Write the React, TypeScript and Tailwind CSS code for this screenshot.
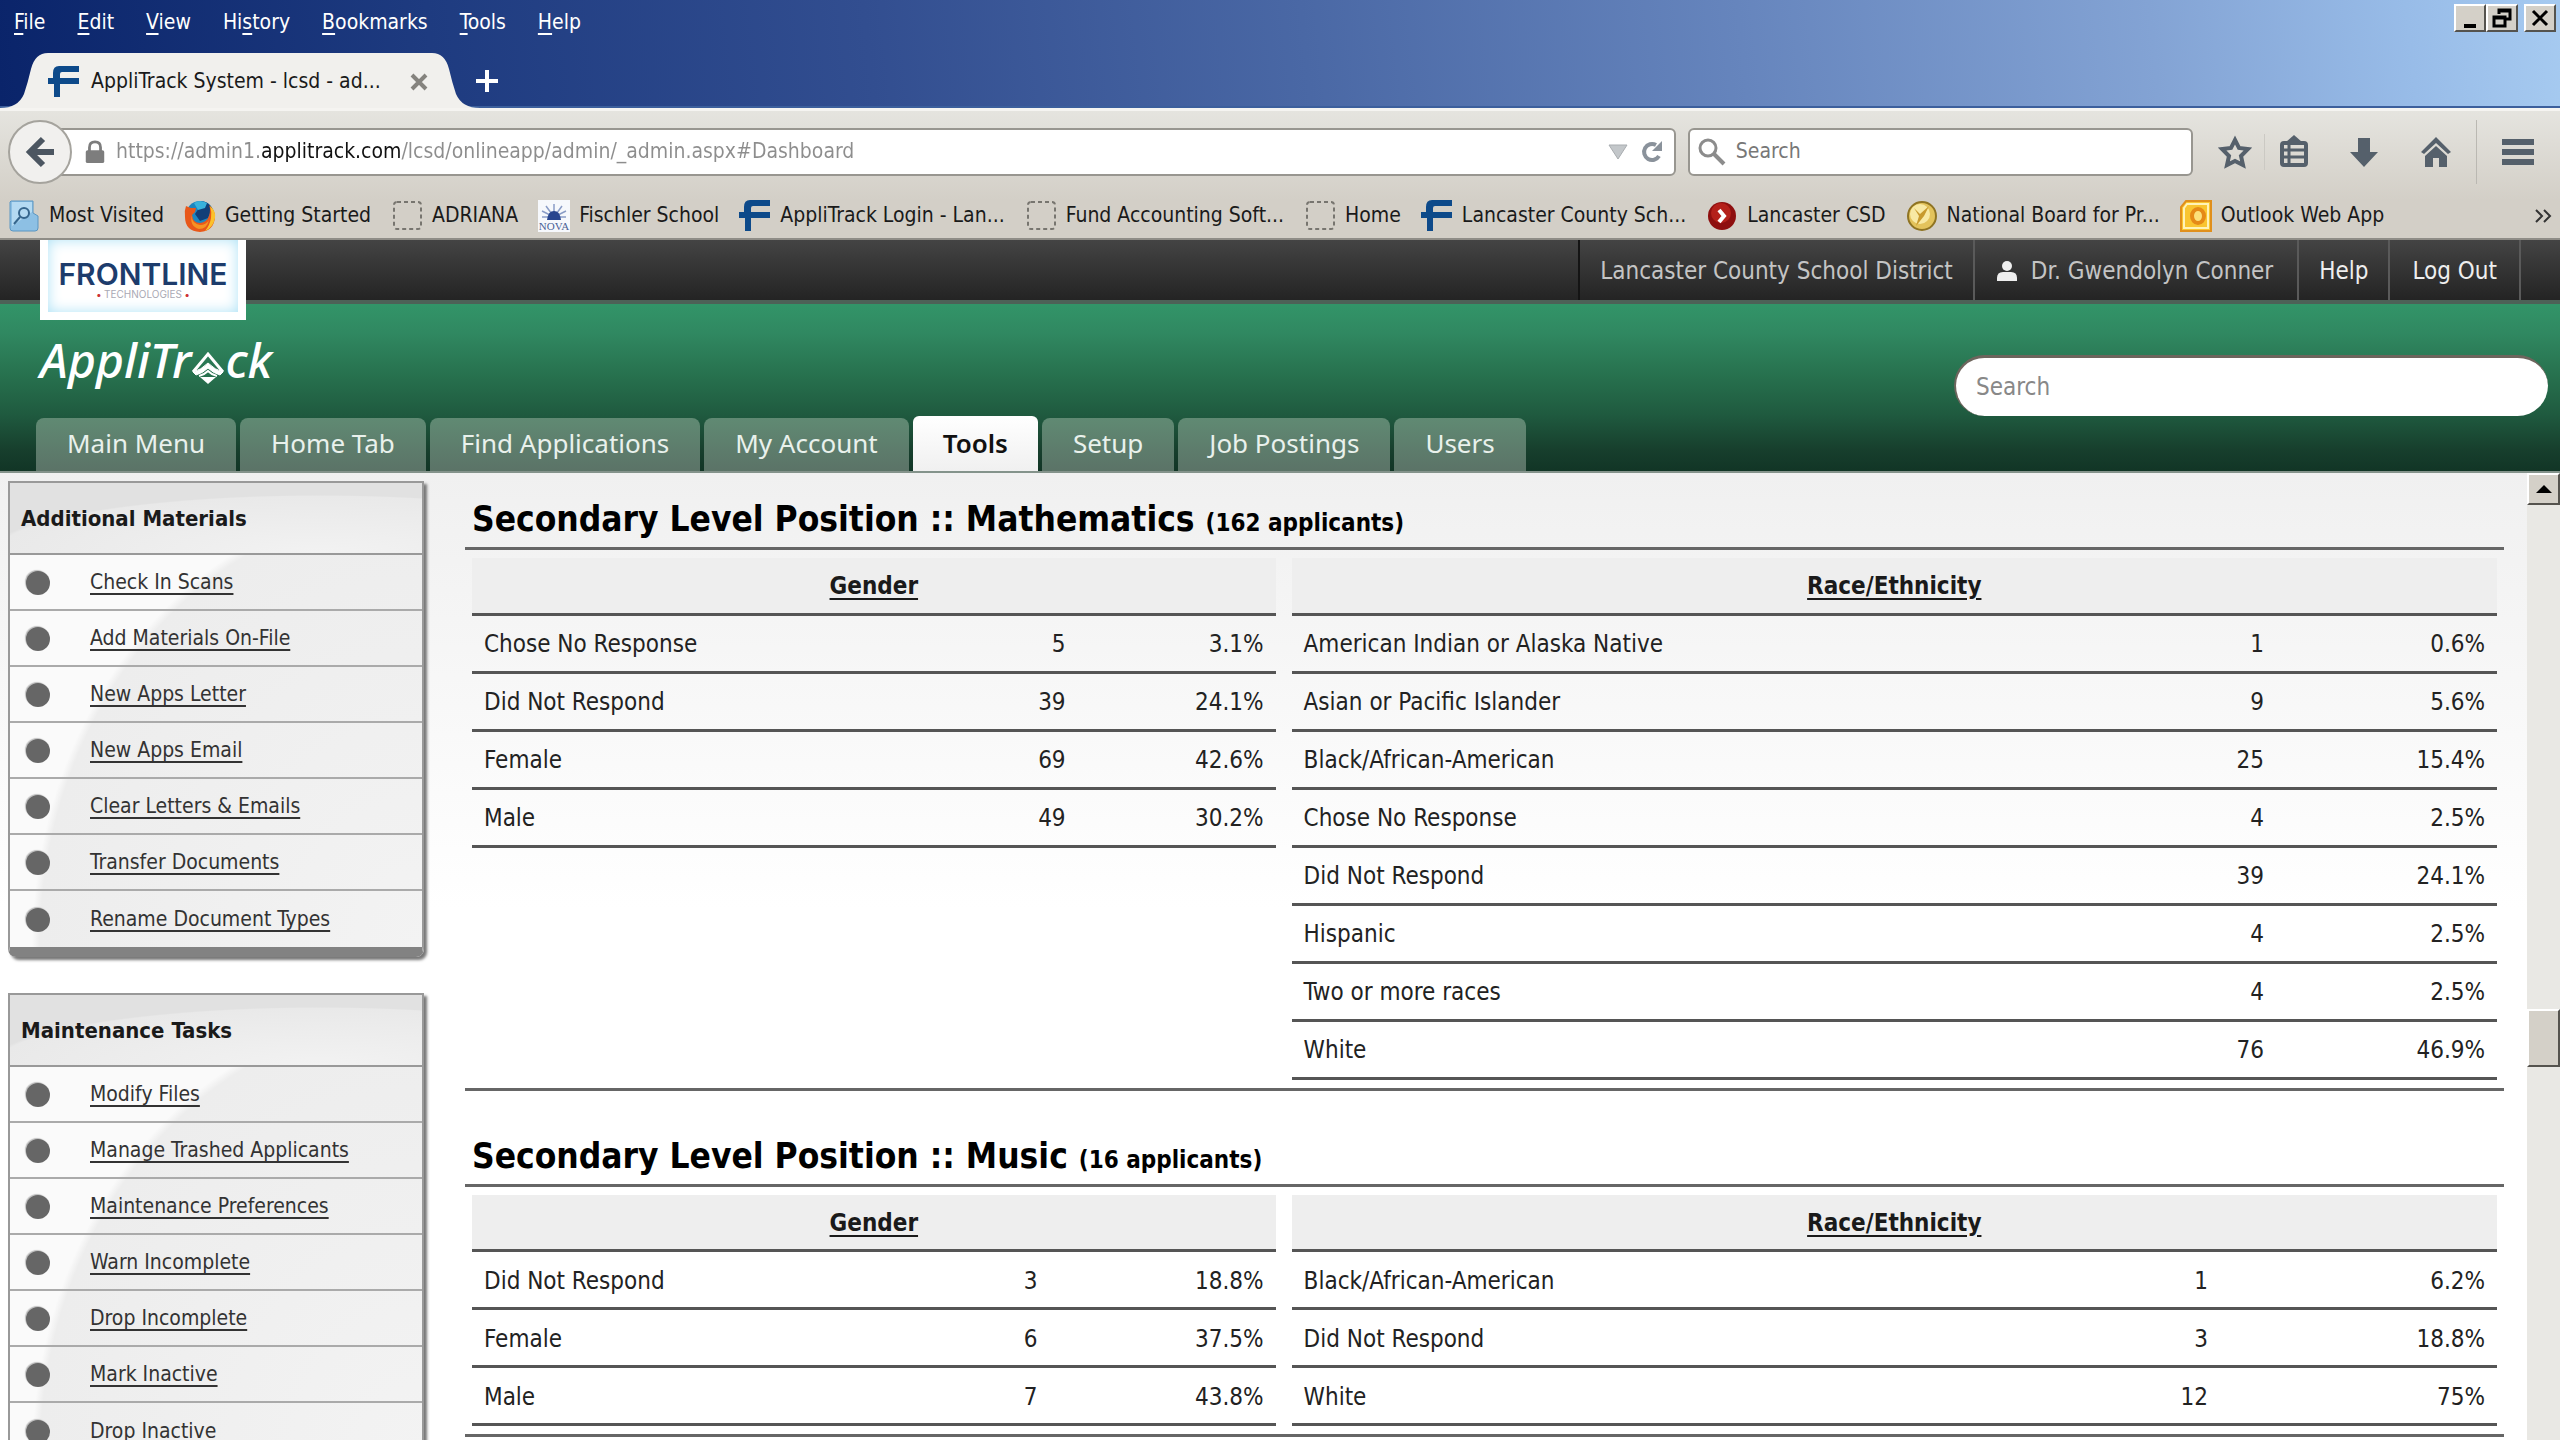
import React from "react";

const menus = [
    ["", "F", "ile"],
    ["", "E", "dit"],
    ["", "V", "iew"],
    ["Hi", "s", "tory"],
    ["", "B", "ookmarks"],
    ["", "T", "ools"],
    ["", "H", "elp"],
];

const tabs = ["Main Menu", "Home Tab", "Find Applications", "My Account", "Tools", "Setup", "Job Postings", "Users"];

const materials = [
    "Check In Scans",
    "Add Materials On-File",
    "New Apps Letter",
    "New Apps Email",
    "Clear Letters & Emails",
    "Transfer Documents",
    "Rename Document Types",
];

const maintenance = [
    "Modify Files",
    "Manage Trashed Applicants",
    "Maintenance Preferences",
    "Warn Incomplete",
    "Drop Incomplete",
    "Mark Inactive",
    "Drop Inactive",
];

type Row = [string, string, string];

const mathGender: Row[] = [
    ["Chose No Response", "5", "3.1%"],
    ["Did Not Respond", "39", "24.1%"],
    ["Female", "69", "42.6%"],
    ["Male", "49", "30.2%"],
];

const mathRace: Row[] = [
    ["American Indian or Alaska Native", "1", "0.6%"],
    ["Asian or Pacific Islander", "9", "5.6%"],
    ["Black/African-American", "25", "15.4%"],
    ["Chose No Response", "4", "2.5%"],
    ["Did Not Respond", "39", "24.1%"],
    ["Hispanic", "4", "2.5%"],
    ["Two or more races", "4", "2.5%"],
    ["White", "76", "46.9%"],
];

const musicGender: Row[] = [
    ["Did Not Respond", "3", "18.8%"],
    ["Female", "6", "37.5%"],
    ["Male", "7", "43.8%"],
];

const musicRace: Row[] = [
    ["Black/African-American", "1", "6.2%"],
    ["Did Not Respond", "3", "18.8%"],
    ["White", "12", "75%"],
];

function FrontlineIcon() {
    return (
        <svg viewBox="0 0 32 32" className="size-8 shrink-0" fill="#0d4a8a">
            <path d="M11 0h20v6H14q-2 0-2 2v4h19v6H12v13H6V18H0v-6h5V7q0-7 6-7z" />
        </svg>
    );
}

function BlankIcon() {
    return (
        <svg viewBox="0 0 32 32" className="size-8 shrink-0" fill="none" stroke="#77756f" strokeWidth="2">
            <rect x="3" y="2" width="27" height="27" rx="3" strokeDasharray="4 3" />
        </svg>
    );
}

function MostVisitedIcon() {
    return (
        <svg viewBox="0 0 32 32" className="size-8 shrink-0">
            <path d="M3 1h22v12l5 3v12q0 3-3 3H5q-3 0-3-3V2z" fill="#8dc0e4" stroke="#5a96c2" />
            <path d="M4 2h20v10l-20 14z" fill="#b4daf2" />
            <circle cx="16" cy="13" r="5" fill="none" stroke="#35658c" strokeWidth="2" />
            <path d="M12 17l-6 7" stroke="#35658c" strokeWidth="2" />
        </svg>
    );
}

function FirefoxIcon() {
    return (
        <svg viewBox="0 0 32 32" className="size-8 shrink-0">
            <circle cx="16" cy="15" r="14" fill="#1c86c0" />
            <path d="M16 1q8 0 12 7l-4 10-8 3-5-7 4-6z" fill="#123f78" />
            <path d="M10 3q6-4 13 0l-2 5-7 2z" fill="#39b2dc" />
            <path d="M2 6q2 1 5 2l5 0-1 4-3 3q1 8 8 8 7-1 9-7 2-6 0-11 6 5 6 12-1 14-15 15Q1 31 1 17 0 11 2 6z" fill="#e8581a" />
            <path d="M26 6q6 5 5 12-2 10-10 13 5-6 6-13 1-6-1-12z" fill="#fbc12c" />
            <path d="M8 15q-1 8 8 10 6 0 9-5-2 9-10 9Q5 26 8 15z" fill="#f59324" />
        </svg>
    );
}

function NovaIcon() {
    return (
        <svg viewBox="0 0 32 32" className="size-8 shrink-0">
            <rect width="32" height="32" fill="#f6f8fc" />
            <g stroke="#8a9cc6" strokeWidth="1.5">
                <path d="M16 17V4M16 17L8 6M16 17l8-11M16 17L4 11M16 17l12-6M16 17H4M16 17h12" />
            </g>
            <path d="M9 20q1-9 7-9t7 9z" fill="#28458e" />
            <text x="16" y="30" textAnchor="middle" fontFamily="Liberation Serif" fontSize="11" fill="#4a5f95">NOVA</text>
        </svg>
    );
}

function RedArrowIcon() {
    return (
        <svg viewBox="0 0 32 32" className="size-8 shrink-0">
            <circle cx="16" cy="16" r="14" fill="#8e0f0f" />
            <circle cx="15" cy="13" r="10" fill="#b4201a" />
            <path d="M13 10l5 6-5 6" fill="none" stroke="#fff" strokeWidth="4" />
        </svg>
    );
}

function MedalIcon() {
    return (
        <svg viewBox="0 0 32 32" className="size-8 shrink-0">
            <circle cx="16" cy="16" r="14" fill="#e3c35c" stroke="#8f7423" strokeWidth="2" />
            <circle cx="14" cy="14" r="10" fill="#f8e9a4" />
            <path d="M8 8l6 6 9-8-5 10-8 10 3-10z" fill="#c89a2e" />
        </svg>
    );
}

function OutlookIcon() {
    return (
        <svg viewBox="0 0 32 32" className="size-8 shrink-0">
            <path d="M6 1h25v30H1V7z" fill="#f9c531" stroke="#e08f1c" strokeWidth="2" />
            <path d="M7 4h21v24H4V8z" fill="none" stroke="#fff3b8" strokeWidth="2" />
            <ellipse cx="18" cy="16" rx="6" ry="7" fill="#fce07a" stroke="#e58a17" strokeWidth="4" />
        </svg>
    );
}

const bookmarks: [React.ReactNode, string][] = [
    [<MostVisitedIcon />, "Most Visited"],
    [<FirefoxIcon />, "Getting Started"],
    [<BlankIcon />, "ADRIANA"],
    [<NovaIcon />, "Fischler School"],
    [<FrontlineIcon />, "AppliTrack Login - Lan..."],
    [<BlankIcon />, "Fund Accounting Soft..."],
    [<BlankIcon />, "Home"],
    [<FrontlineIcon />, "Lancaster County Sch..."],
    [<RedArrowIcon />, "Lancaster CSD"],
    [<MedalIcon />, "National Board for Pr..."],
    [<OutlookIcon />, "Outlook Web App"],
];

function WindowButton({ label, children }: { label: string; children: React.ReactNode }) {
    return (
        <button
            aria-label={label}
            className="flex h-7 w-8 items-center justify-center border-2 border-t-white border-r-[#55534e] border-b-[#55534e] border-l-white bg-[#d4d0c8]"
        >
            {children}
        </button>
    );
}

function TitleBar() {
    return (
        <header className="flex h-[108px] flex-col justify-between border-b-2 border-[#3c5f9c] bg-[linear-gradient(84deg,#0a246a_0%,#1e3b80_17%,#324e90_34%,#4a68a5_51%,#6685bd_68%,#83a3d4_84%,#98bce8_94%,#a6caf0_100%)]">
            <div className="flex items-start justify-between">
                <nav className="flex gap-8 px-3.5 pt-2 text-white">
                    {menus.map(([before, key, after]) => (
                        <button key={key + after} className="leading-7">
                            {before}
                            <span className="underline underline-offset-4">{key}</span>
                            {after}
                        </button>
                    ))}
                </nav>
                <div className="flex pt-1 pr-1">
                    <WindowButton label="Minimize">
                        <svg viewBox="0 0 24 24" className="size-6">
                            <path d="M6 18h12v4H6z" />
                        </svg>
                    </WindowButton>
                    <WindowButton label="Restore">
                        <svg viewBox="0 0 24 24" className="size-6" fill="none" stroke="#000" strokeWidth="2">
                            <path d="M9 8V4h11v9h-4M9 5h11M4 11h11v9H4zM4 12h11" strokeWidth="3" />
                        </svg>
                    </WindowButton>
                    <div className="w-1.5" />
                    <WindowButton label="Close">
                        <svg viewBox="0 0 24 24" className="size-6" stroke="#000" strokeWidth="3">
                            <path d="M5 5l14 14M19 5L5 19" />
                        </svg>
                    </WindowButton>
                </div>
            </div>
            <div className="-mb-0.5 flex h-[55px] items-center">
                <svg viewBox="0 0 48 55" className="h-full w-12 shrink-0">
                    <path d="M0 55q18 0 24-14 4-12 7-25Q35 0 48 0v55z" fill="#f1f0ed" />
                </svg>
                <div className="flex h-full w-96 items-center bg-[#f1f0ed] pt-0.5">
                    <FrontlineIcon />
                    <span className="ml-[11px] flex-1">AppliTrack System - lcsd - ad...</span>
                    <button aria-label="Close tab" className="mr-1">
                        <svg viewBox="0 0 18 18" className="size-[18px]" stroke="#85837e" strokeWidth="4">
                            <path d="M2 2l14 14M16 2L2 16" />
                        </svg>
                    </button>
                </div>
                <svg viewBox="0 0 48 55" className="h-full w-12 shrink-0">
                    <path d="M48 55q-18 0-24-14-4-12-7-25Q13 0 0 0v55z" fill="#f1f0ed" />
                </svg>
                <button aria-label="New tab" className="-ml-1">
                    <svg viewBox="0 0 22 22" className="size-[22px]" stroke="#fff" strokeWidth="4">
                        <path d="M11 0v22M0 11h22" />
                    </svg>
                </button>
            </div>
        </header>
    );
}

function AddressBar() {
    return (
        <div className="flex items-center pt-[9px] pr-[26px] pl-2">
            <button
                aria-label="Back"
                className="z-10 flex size-16 shrink-0 items-center justify-center rounded-full border-2 border-[#a5a39d] bg-[#f1f0ee]"
            >
                <svg viewBox="0 0 32 32" className="size-8" fill="none" stroke="#4c5661" strokeWidth="6">
                    <path d="M30 16H7M19 3L6 16l13 13" />
                </svg>
            </button>
            <div className="-ml-3 flex h-12 min-w-0 flex-[1625_1_0%] items-center rounded-r-md border-2 border-[#989690] bg-white pr-2.5 pl-[22px]">
                <svg viewBox="0 0 22 26" className="h-6 w-[22px] shrink-0" fill="#7d7d7d">
                    <path d="M5 12V8q0-6 6-6t6 6v4" fill="none" stroke="#7d7d7d" strokeWidth="3" />
                    <rect x="1" y="11" width="20" height="14" rx="2" />
                </svg>
                <input
                    aria-label="Address"
                    className="ml-2.5 min-w-0 flex-1 bg-[linear-gradient(90deg,#8d8d8d_0_146px,#111_146px_284px,#8d8d8d_284px)] bg-clip-text text-transparent"
                    defaultValue="https://admin1.applitrack.com/lcsd/onlineapp/admin/_admin.aspx#Dashboard"
                />
                <svg viewBox="0 0 20 16" className="h-4 w-5" fill="#c3c7ca" stroke="#a9adb0">
                    <path d="M1 1h18l-9 14z" />
                </svg>
                <button aria-label="Reload" className="ml-3">
                    <svg viewBox="0 0 24 24" className="size-6" fill="none" stroke="#8a929b" strokeWidth="4">
                        <path d="M19 16a8 8 0 1 1-3-11" />
                        <path d="M22 1v10H12z" fill="#8a929b" stroke="none" />
                    </svg>
                </button>
            </div>
            <label className="ml-3 flex h-12 min-w-0 flex-[499_1_0%] items-center gap-2.5 rounded-md border-2 border-[#989690] bg-white px-2">
                <svg viewBox="0 0 28 28" className="size-7 shrink-0" fill="none" stroke="#8c8c8c" strokeWidth="3">
                    <circle cx="10" cy="10" r="8" />
                    <path d="M16 16l10 10" strokeWidth="4" />
                </svg>
                <input placeholder="Search" className="min-w-0 flex-1 placeholder:text-[#777]" />
            </label>
            <div className="flex items-center text-[#55606b]">
                <button aria-label="Bookmark this page" className="ml-[25px]">
                    <svg viewBox="0 0 34 34" className="size-[34px]" fill="none" stroke="currentColor" strokeWidth="4">
                        <path d="M17 5l4 8 9 1-7 7 2 9-8-4-8 4 2-9-7-7 9-1z" />
                    </svg>
                </button>
                <div className="ml-3 h-9 w-px bg-[#cbc9c3]" />
                <button aria-label="Show bookmarks" className="ml-[13px]">
                    <svg viewBox="0 0 32 34" className="h-[34px] w-8" fill="none" stroke="currentColor" strokeWidth="4">
                        <rect x="4" y="8" width="24" height="22" rx="2" />
                        <path d="M8 7l8-7 8 7z" fill="currentColor" stroke="none" />
                        <path d="M4 15h24M4 22h24M11 8v22" strokeWidth="3" />
                    </svg>
                </button>
                <button aria-label="Downloads" className="ml-[38px]">
                    <svg viewBox="0 0 32 34" className="h-[34px] w-8" fill="currentColor">
                        <path d="M10 3h12v14h8L16 32 2 17h8z" />
                    </svg>
                </button>
                <button aria-label="Home" className="ml-10">
                    <svg viewBox="0 0 32 34" className="h-[34px] w-8" fill="currentColor">
                        <path d="M16 2l15 15-3 2L16 8 4 19l-3-2z" />
                        <path d="M16 11l11 10v11h-8v-9h-6v9H5V21z" />
                    </svg>
                </button>
                <div className="ml-6 h-16 w-px bg-[#bab8b2]" />
                <button aria-label="Open menu" className="ml-[25px]">
                    <svg viewBox="0 0 32 28" className="h-7 w-8" fill="currentColor">
                        <path d="M0 1h32v6H0zM0 11h32v6H0zM0 21h32v6H0z" />
                    </svg>
                </button>
            </div>
        </div>
    );
}

function BookmarksBar() {
    return (
        <div className="flex h-[54px] items-center justify-between pt-2.5 pr-2 pl-2">
            <div className="flex gap-5">
                {bookmarks.map(([icon, label]) => (
                    <a key={label} href="#" className="flex items-center gap-[9px] whitespace-nowrap">
                        {icon}
                        {label}
                    </a>
                ))}
            </div>
            <button aria-label="More bookmarks">
                <svg viewBox="0 0 18 14" className="h-3.5 w-[18px]" fill="none" stroke="#333" strokeWidth="2">
                    <path d="M2 1l6 6-6 6M10 1l6 6-6 6" />
                </svg>
            </button>
        </div>
    );
}

function SiteHeader() {
    return (
        <div className="bg-[linear-gradient(180deg,#329468_28%,#308861_40%,#27714e_58%,#1f5a3f_75%,#173f2d_90%,#113425_100%)]">
            <div className="flex h-16 justify-between border-b-4 border-[#4d6157] bg-linear-to-b from-[#444] to-[#242424] pl-10">
                <div className="z-10 flex h-20 w-[206px] flex-col items-center justify-center border-8 border-t-0 border-white bg-white pt-2 font-['Inter'] shadow-[inset_0_0_14px_#aee2f6]">
                    <span className="text-[30px] leading-7 font-semibold text-[#1d3c6c]">FRONTLINE</span>
                    <span className="text-[10px] leading-3 text-[#a9a9b4]">
                        <b className="text-[#c33]">•</b> TECHNOLOGIES <b className="text-[#c33]">•</b>
                    </span>
                </div>
                <div className="mr-[39px] flex text-2xl text-[#c4c4c4]">
                    <span className="flex items-center border-x-2 border-[#141414] border-r-[#5a5a5a] px-5 pt-0.5">
                        Lancaster County School District
                    </span>
                    <a href="#" className="flex items-center gap-3 border-r-2 border-[#5a5a5a] pt-0.5 pr-6 pl-5">
                        <svg viewBox="0 0 24 26" className="h-[26px] w-6" fill="#eee">
                            <circle cx="12" cy="8" r="5" />
                            <path d="M2 23v-3q0-6 6-6h8q6 0 6 6v3z" />
                        </svg>
                        Dr. Gwendolyn Conner
                    </a>
                    <a href="#" className="flex items-center border-r-2 border-[#5a5a5a] px-5 pt-0.5 text-[#eee]">Help</a>
                    <a href="#" className="flex items-center border-r-2 border-[#5a5a5a] px-[22px] pt-0.5 text-[#eee]">Log Out</a>
                </div>
            </div>
            <div className="flex h-28 items-end justify-between pr-3 pl-10">
                <div className="flex h-full items-center font-['Noto_Sans'] text-[48px] font-medium text-white italic">
                    AppliTr
                    <svg viewBox="0 0 34 34" className="mt-4 size-[34px]" fill="none" stroke="#fff">
                        <path d="M2 21L17 3l15 18" strokeWidth="3" />
                        <path d="M2 21q8-2 15-9 7 7 15 9l-3 3q-7-2-12-7-5 5-12 7z" fill="#fff" strokeWidth="1" />
                        <path d="M8 25q5-1 9-5 4 4 9 5" strokeWidth="2" />
                        <path d="M9 26h16l-8 7z" fill="#fff" stroke="none" />
                    </svg>
                    ck
                </div>
                <input
                    aria-label="Search site"
                    placeholder="Search"
                    className="h-[61px] w-[594px] rounded-full border-t-3 border-l-2 border-[#6d655d] bg-white px-5 text-2xl placeholder:text-[#888]"
                />
            </div>
            <nav className="flex h-[57px] items-end gap-1 border-b-2 border-[#84938b] pl-9 font-['Noto_Sans'] text-[26px]">
                {tabs.map((tab) =>
                    tab === "Tools" ? (
                        <a key={tab} href="#" className="flex h-full items-center rounded-t-md bg-linear-to-b from-white to-[#f0f0f0] px-[30px] font-semibold text-[#111]">
                            {tab}
                        </a>
                    ) : (
                        <a key={tab} href="#" className="flex h-[53px] items-center rounded-t-lg bg-linear-to-b from-[#608a73] to-[#5b7367] px-[31px] pb-0.5 text-[#e9f1ec]">
                            {tab}
                        </a>
                    )
                )}
            </nav>
        </div>
    );
}

function SidePanel({ title, items }: { title: string; items: string[] }) {
    return (
        <section className="rounded-b-lg border-2 border-b-[10px] border-[#999] border-b-[#828282] shadow-[3px_3px_3px_#777]">
            <h3 className="flex h-[72px] items-center border-b-2 border-[#999] bg-[radial-gradient(ellipse_330px_58px_at_75%_100%,#f2f2f2_0%,#e9e9e9_98%,#e1e1e1_100%)] pl-[11px] text-[22px] font-bold">
                {title}
            </h3>
            <ul className="bg-[radial-gradient(ellipse_390px_450px_at_100%_100%,#f3f3f3_0%,#ededed_98%,#fafafa_100%)]">
                {items.map((item) => (
                    <li key={item} className="flex h-14 items-center gap-10 border-b-2 border-[#aaa] pt-0.5 pl-4 last:border-b-0">
                        <span className="size-6 rounded-full bg-[#666] shadow-[-1px_-1px_1px_#bbb]" />
                        <a href="#" className="text-[#333] underline underline-offset-4">{item}</a>
                    </li>
                ))}
            </ul>
        </section>
    );
}

function StatTable({ title, rows, pctCol }: { title: string; rows: Row[]; pctCol: string }) {
    return (
        <table className="w-full table-fixed text-2xl">
            <colgroup>
                <col />
                <col className="w-24" />
                <col className={pctCol} />
            </colgroup>
            <thead>
                <tr className="h-14 border-b-3 border-[#555] bg-[#eee]">
                    <th colSpan={3} className="pt-0.5 underline underline-offset-4">{title}</th>
                </tr>
            </thead>
            <tbody>
                {rows.map(([label, count, pct]) => (
                    <tr key={label} className="h-[58px] border-b-3 border-[#555] text-[#222]">
                        <td className="px-3 pt-0.5">{label}</td>
                        <td className="px-3 pt-0.5 text-right">{count}</td>
                        <td className="px-3 pt-0.5 text-right">{pct}</td>
                    </tr>
                ))}
            </tbody>
        </table>
    );
}

type PositionProps = {
    name: string;
    total: number;
    gender: Row[];
    race: Row[];
    genderCol: string;
    raceCol: string;
};

function Position({ name, total, gender, race, genderCol, raceCol }: PositionProps) {
    return (
        <section className="border-b-3 border-[#666]">
            <h2 className="border-b-3 border-[#666] pt-0.5 pb-1.5 pl-[7px] text-[35px] leading-[44px] font-bold text-black">
                Secondary Level Position :: {name} <span className="text-2xl">({total} applicants)</span>
            </h2>
            <div className="grid grid-cols-[2fr_3fr] items-start gap-4 px-[7px] py-2">
                <StatTable title="Gender" rows={gender} pctCol={genderCol} />
                <StatTable title="Race/Ethnicity" rows={race} pctCol={raceCol} />
            </div>
        </section>
    );
}

function Scrollbar() {
    return (
        <div className="flex w-[33px] shrink-0 flex-col bg-[#e9e8e4]">
            <button
                aria-label="Scroll up"
                className="flex h-8 items-center justify-center border-2 border-t-white border-r-[#55534e] border-b-[#55534e] border-l-white bg-[#d4d0c8]"
            >
                <svg viewBox="0 0 16 8" className="h-2 w-4">
                    <path d="M8 0l8 8H0z" />
                </svg>
            </button>
            <div className="flex-[505_1_0%]" />
            <div className="h-[58px] border-2 border-t-white border-r-[#55534e] border-b-[#55534e] border-l-white bg-[#d4d0c8]" />
            <div className="flex-[374_1_0%]" />
        </div>
    );
}

export default function App() {
    return (
        <div className="flex h-screen flex-col overflow-hidden bg-white font-['DejaVu_Sans_Condensed','DejaVu_Sans',sans-serif] text-[21px] text-[#1a1a1a]">
            <TitleBar />
            <div className="border-t-3 border-b-2 border-t-[#f5f4f1] border-b-[#8f8d87] bg-linear-to-b from-[#e5e4df] to-[#d3cfc7] to-70%">
                <AddressBar />
                <BookmarksBar />
            </div>
            <SiteHeader />
            <div className="flex min-h-0 flex-1">
                <div className="flex min-w-0 flex-1 overflow-hidden bg-linear-to-b from-[#f0f0f0] to-white to-45%">
                    <aside className="flex w-[424px] shrink-0 flex-col gap-9 pt-2 pl-2">
                        <SidePanel title="Additional Materials" items={materials} />
                        <SidePanel title="Maintenance Tasks" items={maintenance} />
                    </aside>
                    <main className="flex min-w-0 flex-1 flex-col gap-[41px] pt-[22px] pr-[23px] pl-[41px]">
                        <Position
                            name="Mathematics"
                            total={162}
                            gender={mathGender}
                            race={mathRace}
                            genderCol="w-[198px]"
                            raceCol="w-[221px]"
                        />
                        <Position
                            name="Music"
                            total={16}
                            gender={musicGender}
                            race={musicRace}
                            genderCol="w-[226px]"
                            raceCol="w-[277px]"
                        />
                    </main>
                </div>
                <Scrollbar />
            </div>
        </div>
    );
}
